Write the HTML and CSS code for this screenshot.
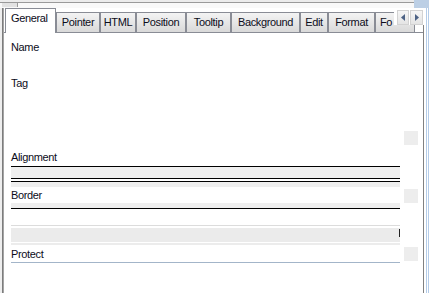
FILE: index.html
```html
<!DOCTYPE html>
<html lang="en">
<head>
    <meta charset="UTF-8">
    <title>Properties</title>
    <link rel="stylesheet" href="styles.css">
</head>
<body>
    <div class="window">
        <div class="topbar">
            <span class="thumb"></span>
            <span class="corner"></span>
        </div>
        <div class="frame">
            <div class="edge-left"></div>
            <div class="content">
                <div class="tabwrap">
                    <div class="tabs">
                        <div class="tab active t-general">General</div>
                        <div class="tab t-pointer">Pointer</div>
                        <div class="tab t-html">HTML</div>
                        <div class="tab t-position">Position</div>
                        <div class="tab t-tooltip">Tooltip</div>
                        <div class="tab t-background">Background</div>
                        <div class="tab t-edit">Edit</div>
                        <div class="tab t-format">Format</div>
                        <div class="tab t-font">Fo</div>
                    </div>
                    <div class="scroller">
                        <span class="arrow">
                            <svg width="4" height="7" viewBox="0 0 4 7"><path d="M4 0 L0 3.5 L4 7 Z" fill="#4d6285"/></svg>
                        </span>
                        <span class="arrow wide">
                            <svg width="4" height="7" viewBox="0 0 4 7"><path d="M0 0 L4 3.5 L0 7 Z" fill="#4d6285"/></svg>
                        </span>
                    </div>
                </div>

                <div class="panel">
                    <div class="label gap-name">Name</div>
                    <div class="label gap-tag">Tag</div>

                    <div class="row gap-row">
                        <div class="field"></div>
                        <span class="btn"></span>
                    </div>

                    <div class="label gap-small">Alignment</div>
                    <div class="field combo"></div>
                    <div class="field strip"></div>

                    <div class="row">
                        <div class="field label">Border</div>
                        <span class="btn"></span>
                    </div>
                    <div class="field underline"></div>

                    <div class="field sunken">
                        <div class="band"><span class="mark"></span></div>
                        <div class="shadow"></div>
                    </div>

                    <div class="row">
                        <div class="field label protect">Protect</div>
                        <span class="btn"></span>
                    </div>
                </div>
            </div>
            <div class="edge-right"></div>
        </div>
    </div>
</body>
</html>
```
FILE: styles.css
```css
html, body {
    margin: 0;
    padding: 0;
    background-color: #fff;
}
body {
    font-family: "Liberation Sans", Arial, sans-serif;
    font-size: 11px;
    line-height: 13px;
    letter-spacing: -0.35px;
    color: #0c0c1a;
}
.window {
    width: 429px;
    height: 293px;
    overflow: hidden;
    display: flex;
    flex-direction: column;
}
.topbar {
    position: relative;
    height: 8px;
    background: linear-gradient(#ececec 0 2px, #9a9a9a 2px 3px, #f9f9f9 3px);
}
.thumb {
    position: absolute;
    left: 2px;
    top: 3px;
    width: 15px;
    height: 4px;
    background-color: #e2e2e2;
    border-right: 1px solid #9a9a9a;
}
.corner {
    position: absolute;
    right: 0;
    top: 0;
    width: 15px;
    height: 8px;
    background-color: #bccfe5;
}
.frame {
    flex: 1;
    display: flex;
}
.edge-left {
    width: 4px;
    background: linear-gradient(to right, #eeeeee 0 2px, #7c7c7c 2px 3px, #a4a4a4 3px);
}
.edge-right {
    width: 6px;
    background: linear-gradient(to right, #808080 0 1px, #fff 1px 3px, #b4cce8 3px 4px, #fff 4px 5px, #b4cce8 5px);
}
.content {
    width: 419px;
    display: flex;
    flex-direction: column;
}
.tabwrap {
    position: relative;
    height: 25px;
    background: linear-gradient(to top, #898c95 1px, #fff 1px);
}
.tabs {
    height: 25px;
    display: flex;
    align-items: flex-end;
    padding-left: 1px;
    overflow: hidden;
}
.tab {
    flex: none;
    box-sizing: border-box;
    height: 20px;
    margin-bottom: 1px;
    padding-top: 3px;
    text-align: center;
    white-space: nowrap;
    border: 1px solid #898c95;
    border-bottom: none;
    background: linear-gradient(#f4f4f4, #e6e6e6 50%, #d9d9d9);
}
.tab.active {
    height: 25px;
    margin-bottom: 0;
    padding-left: 5px;
    text-align: left;
    background: #fff;
    position: relative;
    z-index: 1;
}
.t-general { width: 51px; }
.t-pointer { width: 44px; }
.t-html { width: 36px; }
.t-position { width: 50px; }
.t-tooltip { width: 45px; }
.t-background { width: 69px; }
.t-edit { width: 28px; }
.t-format { width: 47px; }
.t-font { width: 40px; text-align: left; padding-left: 4px; }
.scroller {
    position: absolute;
    left: 390px;
    top: 0;
    width: 30px;
    height: 17px;
    padding: 2px 0 0 3px;
    box-sizing: border-box;
    background-color: #fff;
    display: flex;
    gap: 1px;
    z-index: 2;
}
.arrow {
    width: 12px;
    height: 15px;
    box-sizing: border-box;
    border: 1px solid #d2d2d2;
    background: linear-gradient(#f6f6f6, #e4e4e4);
    display: flex;
    align-items: center;
    justify-content: center;
}
.arrow.wide {
    width: 13px;
}
.panel {
    flex: 1;
    padding: 8px 0 0 7px;
}
.label {
    height: 13px;
}
.gap-name { margin-bottom: 23px; }
.gap-tag { margin-bottom: 41px; }
.gap-row { margin-bottom: 6px; }
.gap-small { margin-bottom: 2px; }
.row {
    display: flex;
    align-items: flex-start;
    gap: 4px;
}
.field {
    width: 389px;
    flex: none;
}
.row .field {
    height: 14px;
}
.btn {
    width: 14px;
    height: 14px;
    background-color: #ededed;
}
.combo {
    height: 11px;
    border-top: 1px solid #000;
    border-bottom: 1px solid #000;
    background-color: #efefef;
    margin-bottom: 2px;
}
.strip {
    height: 5px;
    border-top: 1px solid #000;
    background-color: #efefef;
    margin-bottom: 2px;
}
.underline {
    height: 5px;
    background-color: #efefef;
    border-bottom: 1px solid #000;
}
.sunken {
    margin-top: 16px;
    border-top: 1px solid #dcdcdc;
    padding-top: 2px;
    margin-bottom: 2px;
}
.band {
    height: 14px;
    background-color: #ebebeb;
    display: flex;
    justify-content: flex-end;
    align-items: flex-start;
}
.mark {
    width: 1px;
    height: 8px;
    margin-top: 1px;
    background-color: #222;
}
.shadow {
    height: 2px;
    margin-top: 1px;
    background-color: #ececec;
}
.row .protect {
    height: 16px;
    padding-top: 1px;
    box-sizing: border-box;
    border-bottom: 1px solid #a3b5c9;
}
```
